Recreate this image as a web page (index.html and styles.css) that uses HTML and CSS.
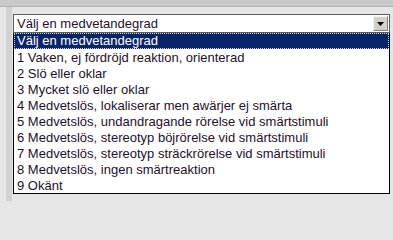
FILE: index.html
```html
<!DOCTYPE html>
<html lang="sv">
<head>
<meta charset="utf-8">
<link rel="stylesheet" href="styles.css">
</head>
<body>
<div class="topbar"></div>
<div class="main">
  <div class="gutter"></div>
  <div class="field">
    <div class="select">
      <span class="select-text">Välj en medvetandegrad</span>
      <span class="arrow-btn"><svg width="7" height="4" viewBox="0 0 7 4"><path d="M0 0H7L3.5 4Z" fill="#000"/></svg></span>
    </div>
    <ul class="list">
      <li class="opt sel">Välj en medvetandegrad</li>
      <li class="opt">1 Vaken, ej fördröjd reaktion, orienterad</li>
      <li class="opt">2 Slö eller oklar</li>
      <li class="opt">3 Mycket slö eller oklar</li>
      <li class="opt">4 Medvetslös, lokaliserar men awärjer ej smärta</li>
      <li class="opt">5 Medvetslös, undandragande rörelse vid smärtstimuli</li>
      <li class="opt">6 Medvetslös, stereotyp böjrörelse vid smärtstimuli</li>
      <li class="opt">7 Medvetslös, stereotyp sträckrörelse vid smärtstimuli</li>
      <li class="opt">8 Medvetslös, ingen smärtreaktion</li>
      <li class="opt">9 Okänt</li>
    </ul>
  </div>
</div>
</body>
</html>
```

FILE: styles.css
```css
html, body {
  margin: 0;
  padding: 0;
  background: #e6e6e6;
  font-family: "Liberation Sans", Arial, sans-serif;
  font-size: 13px;
  color: #24102a;
  overflow: hidden;
}
.topbar {
  height: 6px;
  background: #c9c9c9;
  border-bottom: 1px solid #b0b0b0;
}
.main {
  display: flex;
  height: 194px;
}
.gutter {
  width: 6px;
  margin-left: 6px;
  background: #d2d2d2;
}
.field {
  width: 377px;
  margin-left: 1px;
  padding-top: 7px;
}
.select {
  height: 17px;
  border: 1px solid #5c5c5c;
  background: #fff;
  display: flex;
  align-items: center;
  justify-content: space-between;
  padding: 0 1px 0 3px;
}
.select-text {
  line-height: 17px;
}
.arrow-btn {
  width: 15px;
  height: 15px;
  background: #d4d0c8;
  display: flex;
  align-items: center;
  justify-content: center;
  box-sizing: border-box;
  border-top: 1px solid #f4f4f4;
  border-left: 1px solid #f4f4f4;
  border-right: 1px solid #808080;
  border-bottom: 1px solid #808080;
}
.list {
  list-style: none;
  margin: 0;
  padding: 0;
  border: 1px solid #000;
  border-top: none;
  background: #fff;
}
.opt {
  height: 16px;
  line-height: 16px;
  padding-left: 2px;
  box-sizing: border-box;
  white-space: nowrap;
  border: 1px solid transparent;
}
.opt.sel {
  background: #0a246a;
  color: #fff;
  border: 1px dotted #d8d8d8;
  line-height: 14px;
}
```
